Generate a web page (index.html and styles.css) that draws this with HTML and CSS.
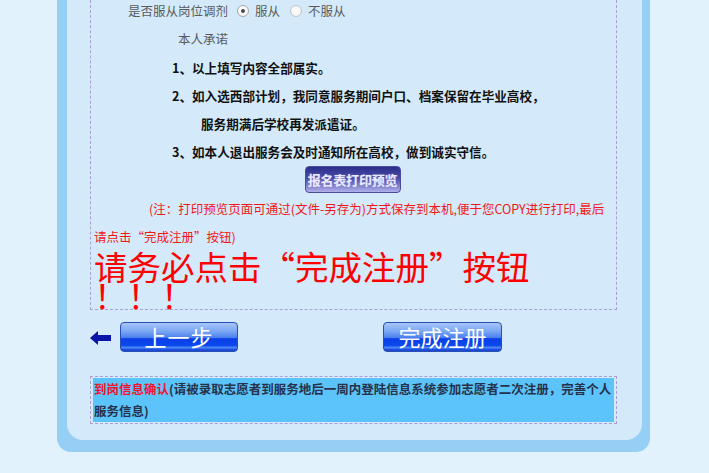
FILE: index.html
```html
<!DOCTYPE html>
<html lang="zh-CN">
<head>
<meta charset="utf-8">
<title>完成注册</title>
<link rel="stylesheet" href="styles.css">
</head>
<body>
<div class="page">
  <div class="frame">
    <div class="panel">
      <div class="form-box">
        <div class="row-adjust">
          <span class="label">是否服从岗位调剂</span>
          <span class="radio checked"></span><span class="opt">服从</span>
          <span class="radio"></span><span class="opt">不服从</span>
        </div>
        <div class="promise-title">本人承诺</div>
        <div class="promise">1、以上填写内容全部属实。</div>
        <div class="promise">2、如入选西部计划，我同意服务期间户口、档案保留在毕业高校，</div>
        <div class="promise indent">服务期满后学校再发派遣证。</div>
        <div class="promise">3、如本人退出服务会及时通知所在高校，做到诚实守信。</div>
        <div class="print-row"><span class="btn-print">报名表打印预览</span></div>
        <p class="note">(注：打印预览页面可通过(文件-另存为)方式保存到本机,便于您COPY进行打印,最后<br>请点击“完成注册”按钮)</p>
        <p class="warn">请务必点击“完成注册”按钮<br>！！！</p>
      </div>
      <div class="nav-row">
        <svg class="arrow" width="21" height="14" viewBox="0 0 21 14"><path d="M0 7 L8 0 L8 4 L21 4 L21 10 L8 10 L8 14 Z" fill="#0a14a8"/></svg>
        <span class="btn-blue btn-back">上一步</span>
        <span class="btn-blue btn-done">完成注册</span>
      </div>
      <div class="info-box">
        <div class="info-fill"><span class="info-red">到岗信息确认</span>(请被录取志愿者到服务地后一周内登陆信息系统参加志愿者二次注册，完善个人<br>服务信息)</div>
      </div>
    </div>
  </div>
</div>
</body>
</html>
```

FILE: styles.css
```css
html, body {
  margin: 0;
  padding: 0;
}
body {
  background: #e2f2fc;
  font-family: "Noto Sans CJK SC", "Noto Sans", sans-serif;
  height: 473px;
  overflow: hidden;
}
.page {
  padding-left: 57px;
}
.frame {
  width: 575px;
  background: #96cff5;
  padding: 0 8px 12px 10px;
  border-radius: 0 0 14px 14px;
}
.panel {
  background: #d4eafa;
  border-radius: 0 0 16px 16px;
  padding: 0 0 16px 23px;
}
.form-box {
  width: 527px;
  box-sizing: border-box;
  border: 1px dashed #a99fd4;
  border-top: none;
}
.row-adjust {
  height: 22px;
  line-height: 22px;
  padding-left: 37px;
  font-size: 12.5px;
  color: #5a5a5a;
  display: flex;
  align-items: center;
}
.row-adjust .label {
  margin-right: 9px;
}
.radio {
  width: 10px;
  height: 10px;
  border-radius: 50%;
  border: 1px solid #c4c4c4;
  background: radial-gradient(circle at 50% 40%, #ffffff 0%, #eeeeee 100%);
  box-sizing: content-box;
  position: relative;
  margin-right: 6px;
}
.radio.checked {
  border-color: #a8a8a8;
}
.radio.checked::after {
  content: "";
  position: absolute;
  left: 3px;
  top: 3px;
  width: 4px;
  height: 4px;
  border-radius: 50%;
  background: #4a4a4a;
}
.opt {
  margin-right: 10px;
}
.promise-title {
  margin-top: 6px;
  height: 22px;
  line-height: 22px;
  padding-left: 87px;
  font-size: 12.5px;
  color: #5a5a5a;
}
.promise {
  height: 28px;
  line-height: 28px;
  padding-left: 81px;
  font-size: 12.6px;
  font-weight: bold;
  color: #111;
  white-space: nowrap;
}
.promise-title + .promise {
  margin-top: 4px;
}
.promise.indent {
  padding-left: 110px;
}
.print-row {
  height: 27px;
  display: flex;
  justify-content: center;
  padding-right: 2px;
}
.btn-print {
  width: 96px;
  height: 27px;
  box-sizing: border-box;
  border: 1px solid #4b4c9e;
  border-radius: 4px;
  background: linear-gradient(#2c2f8a 0%, #4a4ca6 45%, #8a8ad4 80%, #b0b0ea 100%);
  color: #e8e8ff;
  font-size: 13px;
  font-weight: bold;
  line-height: 25px;
  text-align: center;
  text-shadow: 0 0 1px #9a9ad8;
  letter-spacing: -0.2px;
}
.note {
  margin: 2px 0 0 0;
  padding-left: 3px;
  text-indent: 55px;
  font-size: 12.5px;
  line-height: 28px;
  color: #f21818;
  white-space: nowrap;
}
.warn {
  margin: 0;
  padding-left: 3px;
  font-size: 33.5px;
  line-height: 29px;
  color: #ff0000;
  white-space: nowrap;
}
.nav-row {
  margin-top: 12px;
  height: 30px;
  display: flex;
  align-items: center;
}
.arrow {
  display: block;
  margin-top: 1px;
  margin-right: 9px;
}
.btn-blue {
  display: block;
  height: 30px;
  box-sizing: border-box;
  border: 1px solid #2a4fb4;
  border-radius: 4px;
  background: linear-gradient(#a6c6f8 0%, #7aa6f4 30%, #4b80ee 52%, #0c3ee6 56%, #0a48ee 80%, #4f8af2 88%, #1e52e6 94%, #1b45c8 100%);
  color: #ffffff;
  font-size: 22px;
  line-height: 27px;
  text-align: center;
}
.btn-back {
  width: 118px;
  letter-spacing: 1px;
}
.btn-done {
  width: 119px;
  margin-left: 145px;
}
.info-box {
  margin-top: 24px;
  width: 527px;
  box-sizing: border-box;
  border: 1px dashed #a99fd4;
  padding: 1px 2px;
}
.info-fill {
  background: #5cc4fb;
  padding-left: 1px;
  font-size: 12.5px;
  line-height: 22px;
  font-weight: bold;
  color: #26324a;
  white-space: nowrap;
}
.info-red {
  color: #f0142c;
}
```
